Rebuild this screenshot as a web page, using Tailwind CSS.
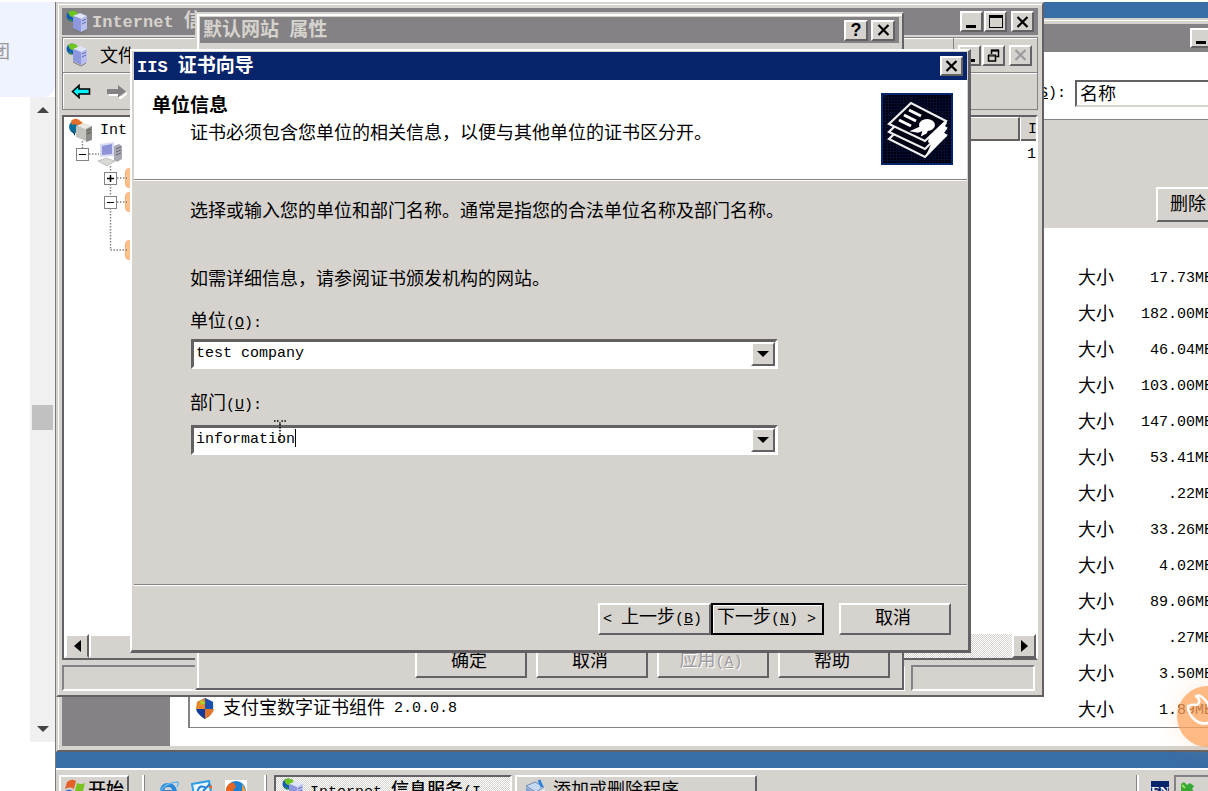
<!DOCTYPE html>
<html lang="zh-CN">
<head>
<meta charset="utf-8">
<title>IIS 证书向导</title>
<script src="https://cdn.jsdelivr.net/npm/@tailwindcss/browser@4"></script>
</head>
<body class="flex h-screen overflow-hidden bg-white pt-[2px] font-['Liberation_Mono','Noto_Sans_CJK_SC',monospace] text-lg leading-6 text-black">

<!-- Shared icons -->
<svg class="hidden" aria-hidden="true">
  <symbol id="server" viewBox="0 0 22 24">
    <circle cx="6" cy="6" r="5.500" fill="#1559b5"/>
    <path d="M2 2Q6-1 11 2L12 6 8 8 4 6z" fill="#6fc51f"/><path d="M2 8l4 2-1 2z" fill="#2a9a30"/>
    <path d="M7 6l7-3 7 3-6 3z" fill="#dfe4fb"/><path d="M7 6l8 3v13l-8-4z" fill="#8e98dc"/><path d="M15 9l6-3v13l-6 3z" fill="#b9bfee"/>
    <path d="M16 11l4-2M16 14l4-2" stroke="#5b66b0"/><path d="M7 19l8 4 5-3" fill="none" stroke="#777"/>
  </symbol>
  <symbol id="server-gray" viewBox="0 0 24 24">
    <circle cx="6" cy="9" r="6" fill="#0b6f9e"/><path d="M2 12l4 3v3z" fill="#063d63"/>
    <path d="M2 3Q6-1 10 2L14 5 9 8 6 6 3 7z" fill="#e2702a"/>
    <path d="M7 8l8-3 8 3-6 3z" fill="#e8e8e0"/><path d="M7 8l10 3v12l-10-4z" fill="#c3c3bd"/><path d="M17 11l6-3v14l-6 2z" fill="#8c8c88"/>
    <path d="M18 13l4-2M18 16l4-2" stroke="#555"/>
  </symbol>
  <symbol id="cross" viewBox="0 0 12 12"><path d="M1 1l10 10M11 1L1 11" stroke="currentColor" stroke-width="2.200"/></symbol>
</svg>

<!-- Host page edge with its scrollbar -->
<aside class="flex w-[56px] shrink-0 flex-col border-r border-[#7b797b]">
  <div class="h-[95px] overflow-hidden rounded-br-xl bg-[#eff3ff] pt-[37px]"><span class="-ml-2 block text-lg text-[#999]">团</span></div>
  <div class="ml-[30px] flex h-[645px] flex-col items-center bg-[#f0f0f0]">
    <svg class="mt-[10px] h-[6px] w-3" viewBox="0 0 12 6"><path d="M6 0l6 6H0z" fill="#444"/></svg>
    <div class="mt-[292px] h-[25px] w-[21px] bg-[#c1c1c1]"></div>
    <svg class="mt-auto mb-[10px] h-[6px] w-3" viewBox="0 0 12 6"><path d="M0 0h12L6 6z" fill="#444"/></svg>
  </div>
</aside>

<main class="flex min-w-0 flex-1 flex-col overflow-hidden">
  <div class="relative flex-1 overflow-hidden bg-[#396da5]">

    <!-- Add / remove programs -->
    <section class="absolute top-4 right-[-60px] bottom-4 left-0 flex flex-col border-2 border-t-[#d6d3ce] border-r-[#636163] border-b-[#636163] border-l-[#d6d3ce] bg-[#d6d3ce] p-1 inset-shadow-[1px_1px_0_#fff]">
      <div class="flex h-7 shrink-0 items-center justify-end bg-[#848284] px-1">
        <button aria-label="最小化" class="flex h-5 w-[22px] items-end border-2 border-t-white border-r-[#636163] border-b-[#636163] border-l-white bg-[#d6d3ce] px-1 pb-[2px]"><span class="h-[3px] w-[10px] bg-black"></span></button>
        <button aria-label="最大化" class="flex h-5 w-[22px] items-center justify-center border-2 border-t-white border-r-[#636163] border-b-[#636163] border-l-white bg-[#d6d3ce]"><span class="h-3 w-3 border border-t-2 border-black"></span></button>
        <button aria-label="关闭" class="ml-[2px] flex h-5 w-[22px] items-center justify-center border-2 border-t-white border-r-[#636163] border-b-[#636163] border-l-white bg-[#d6d3ce]"><svg class="h-3 w-[13px]"><use href="#cross"/></svg></button>
      </div>
      <div class="flex flex-1">
        <div class="w-[108px] shrink-0 bg-[#848284]"></div>
        <div class="flex flex-1 flex-col bg-white">
          <div class="flex h-[67px] items-center justify-end pt-4 pr-[27px]">
            <label for="sort" class="mr-[9px] text-[15px]">(<u>S</u>):</label>
            <select id="sort" class="h-[27px] w-[160px] appearance-none border-2 border-t-[#636163] border-r-[#d6d3ce] border-b-[#d6d3ce] border-l-[#636163] bg-white pt-[2px] pl-[3px] leading-5"><option>名称</option></select>
          </div>
          <div class="flex h-[109px] items-end justify-end border-t border-[#848284] bg-[#d6d3ce] pr-[22px] pb-[6px]">
            <button class="h-[35px] w-[84px] border-2 border-t-white border-r-[#636163] border-b-[#636163] border-l-white pr-5">删除</button>
          </div>
          <div class="mt-[31px] ml-[18px] border-b border-l-2 border-[#848284]">
            <table class="w-full">
              <tbody id="rows" class="[&_td]:h-9 [&_td]:p-0 [&_td]:pt-1"></tbody>
            </table>
          </div>
        </div>
      </div>
    </section>

    <!-- Internet information services manager -->
    <section class="absolute top-0 right-[164px] bottom-[71px] left-0 flex flex-col border-2 border-t-[#d6d3ce] border-r-[#636163] border-b-[#636163] border-l-[#d6d3ce] bg-[#d6d3ce] p-1 inset-shadow-[1px_1px_0_#fff]">
      <div class="flex h-[27px] shrink-0 items-center bg-[#848284] px-1 text-[#d6d3ce]">
        <svg class="mr-1 h-6 w-[22px]"><use href="#server"/></svg>
        <h2 class="pt-[2px] text-[19px] font-bold whitespace-nowrap"><span class="text-[17px]">Internet </span>信</h2>
        <div class="ml-auto flex text-black">
          <button aria-label="最小化" class="flex h-[21px] w-[23px] items-end border-2 border-t-white border-r-[#636163] border-b-[#636163] border-l-white bg-[#d6d3ce] px-1 pb-[2px]"><span class="h-[3px] w-[10px] bg-black"></span></button>
          <button aria-label="最大化" class="ml-px flex h-[21px] w-[23px] items-center justify-center border-2 border-t-white border-r-[#636163] border-b-[#636163] border-l-white bg-[#d6d3ce]"><span class="h-[13px] w-[14px] border border-t-3 border-black"></span></button>
          <button aria-label="关闭" class="ml-1 flex h-[21px] w-[23px] items-center justify-center border-2 border-t-white border-r-[#636163] border-b-[#636163] border-l-white bg-[#d6d3ce]"><svg class="h-3 w-[13px]"><use href="#cross"/></svg></button>
        </div>
      </div>
      <div class="mt-[2px] flex h-[73px] shrink-0 flex-col border border-[#848284] inset-shadow-[1px_1px_0_#fff]">
        <div class="flex h-[35px] items-center border-b border-[#848284] pr-[5px] pl-[3px]">
          <svg class="mr-3 h-6 w-[22px]"><use href="#server"/></svg>
          <span class="pt-[3px]">文件</span>
          <div class="ml-auto flex h-full items-center border-l border-[#848284]">
            <button aria-label="最小化子窗口" class="ml-1 flex h-[21px] w-[23px] items-end border-2 border-t-white border-r-[#636163] border-b-[#636163] border-l-white px-1 pb-[2px]"><span class="h-[3px] w-[12px] bg-black"></span></button>
            <button aria-label="还原子窗口" class="mr-1 ml-px flex h-[21px] w-[23px] items-center justify-center border-2 border-t-white border-r-[#636163] border-b-[#636163] border-l-white">
              <svg class="h-[13px] w-[13px]" viewBox="0 0 13 13" fill="none" stroke="#000"><path d="M4 1h8M4 2h8M1 6h8M1 7h8" /><path d="M4.500 5V1.500h7v6H9.500M1.500 6v6h7V6" stroke-width="1.500"/></svg></button>
            <button aria-label="关闭子窗口" disabled class="flex h-[21px] w-[23px] items-center justify-center border-2 border-t-white border-r-[#636163] border-b-[#636163] border-l-white text-[#9c9a9c]"><svg class="h-3 w-[13px]"><use href="#cross"/></svg></button>
          </div>
        </div>
        <div class="flex flex-1 items-center gap-4 border-t border-white pl-2">
          <svg class="h-[15px] w-5" viewBox="0 0 20 15"><path d="M1.500 7.500L8 1.500V5h10.500v5H8v3.500z" fill="#00f3ff" stroke="#000" stroke-width="1.600"/></svg>
          <svg class="h-[15px] w-5" viewBox="0 0 20 15"><path d="M20 9l-7 6v-4H2" fill="none" stroke="#fff" stroke-width="2"/><path d="M0 5h11V1l8 6.500-8 6V10H0z" fill="#848284"/></svg>
        </div>
      </div>
      <div class="mt-[5px] flex flex-1 flex-col border-2 border-t-[#636163] border-r-white border-b-[#636163] border-l-[#636163] bg-white pl-px">
        <div class="flex flex-1">
          <div class="relative w-[300px] pt-px">
            <svg class="absolute top-0 left-0 h-[150px] w-[66px]" fill="none" stroke="#848284" stroke-width="1.500" stroke-dasharray="1.500 1.500"><path d="M17.500 24v8M24 37h10M45.500 49v6M52 61h10M45.500 67v12M52 85h10M45.500 91v42h17"/></svg>
            <div class="flex h-6 items-center pl-1"><svg class="mr-[7px] h-6 w-6"><use href="#server-gray"/></svg><span class="pt-[2px] text-[15px]">Int</span></div>
            <div class="flex h-6 items-center gap-[9px] pl-[11px]">
              <button aria-label="折叠" class="flex h-[13px] w-[13px] items-center justify-center border border-[#848284] bg-white"><span class="h-px w-[7px] bg-black"></span></button>
              <svg class="h-6 w-6" viewBox="0 0 24 24"><path d="M16 4l5-2 3 2v13l-5 3-3-2z" fill="#a8a8b4"/><path d="M18 7l5-2M18 10l5-2M18 13l5-2" stroke="#666"/><path d="M2 2l14-2v14L2 15z" fill="#d8daf4"/><path d="M4 4l10-2v10L4 13z" fill="#8d93d6"/><path d="M0 19l8-3 9 3-8 5z" fill="#d9d9d4" stroke="#999" stroke-width=".5"/></svg>
            </div>
            <div class="flex h-6 items-center gap-2 pl-[39px]">
              <button aria-label="展开" class="flex h-[13px] w-[13px] items-center justify-center border border-[#848284] bg-white"><svg class="h-[9px] w-[9px]" viewBox="0 0 9 9"><path d="M4.500 1v7M1 4.500h7" stroke="#000" stroke-width="1.500"/></svg></button>
              <span class="h-5 w-6 rounded-l border border-[#ffb27a] bg-[#ffc08a]"></span>
            </div>
            <div class="flex h-6 items-center gap-2 pl-[39px]">
              <button aria-label="折叠" class="flex h-[13px] w-[13px] items-center justify-center border border-[#848284] bg-white"><span class="h-px w-[7px] bg-black"></span></button>
              <span class="h-5 w-6 rounded-l border border-[#ffb27a] bg-[#ffc08a]"></span>
            </div>
            <div class="mt-6 flex h-6 items-center pl-[60px]"><span class="h-5 w-6 rounded-l border border-[#ffb27a] bg-[#ffc08a]"></span></div>
          </div>
          <div class="flex-1 overflow-hidden">
            <div class="flex h-6 items-center justify-end border-b-2 border-[#636163] bg-[#d6d3ce]">
              <div class="h-full flex-1 border-t border-r-2 border-t-white border-r-[#636163]"></div>
              <div class="w-4 overflow-hidden border-l border-white pt-1 pl-[7px] text-[15px]">I</div>
            </div>
            <div class="pt-[2px] text-right text-[15px]">1</div>
          </div>
        </div>
        <div class="flex h-6 bg-[repeating-conic-gradient(#fff_0_25%,#d6d3ce_0_50%)] bg-[length:2px_2px]">
          <button aria-label="向左滚动" class="flex w-6 items-center justify-center border-2 border-t-white border-r-[#636163] border-b-[#d6d3ce] border-l-white bg-[#d6d3ce]"><svg class="h-3 w-[7px]" viewBox="0 0 7 12"><path d="M7 0v12L0 6z"/></svg></button>
          <div class="w-3/5 border-2 border-t-white border-r-[#636163] border-b-[#d6d3ce] border-l-white bg-[#d6d3ce]"></div>
          <button aria-label="向右滚动" class="ml-auto flex w-6 items-center justify-center border-2 border-t-white border-r-[#636163] border-b-[#636163] border-l-white bg-[#d6d3ce]"><svg class="h-3 w-[7px]" viewBox="0 0 7 12"><path d="M0 0v12l7-6z"/></svg></button>
        </div>
      </div>
      <div class="mt-[5px] flex h-[26px] shrink-0 gap-[6px] pr-[3px]">
        <div class="flex-1 border-2 border-t-[#848284] border-r-white border-b-white border-l-[#848284]"></div>
        <div class="w-[124px] border-2 border-t-[#848284] border-r-white border-b-white border-l-[#848284]"></div>
      </div>
    </section>

    <!-- Default web site properties -->
    <section class="absolute top-[10px] right-[304px] bottom-[78px] left-[139px] flex flex-col border-2 border-t-[#d6d3ce] border-r-[#636163] border-b-[#636163] border-l-[#d6d3ce] bg-[#d6d3ce] p-[3px] pb-[10px] inset-shadow-[2px_2px_0_#fff]">
      <div class="flex h-[26px] shrink-0 items-center bg-[#848284] pr-1 pl-[3px]">
        <h2 class="pt-[2px] text-[19px] font-bold text-[#d6d3ce]">默认网站<span class="text-[17px]">&nbsp;</span>属性</h2>
        <button aria-label="帮助" class="ml-auto flex h-[21px] w-6 items-center justify-center border-2 border-t-white border-r-[#636163] border-b-[#636163] border-l-white bg-[#d6d3ce] font-['Liberation_Sans'] text-lg leading-4 font-bold">?</button>
        <button aria-label="关闭" class="ml-[3px] flex h-[21px] w-6 items-center justify-center border-2 border-t-white border-r-[#636163] border-b-[#636163] border-l-white bg-[#d6d3ce]"><svg class="h-3 w-[13px]"><use href="#cross"/></svg></button>
      </div>
      <div class="mt-auto flex justify-end gap-[9px] pr-[9px]">
        <button class="h-8 w-[112px] border-2 border-t-white border-r-[#636163] border-b-[#636163] border-l-white pr-1">确定</button>
        <button class="h-8 w-[112px] border-2 border-t-white border-r-[#636163] border-b-[#636163] border-l-white pr-1">取消</button>
        <button disabled class="h-8 w-[112px] border-2 border-t-white border-r-[#636163] border-b-[#636163] border-l-white pr-1 text-[#9c9a9c] text-shadow-[1px_1px_0_#fff]">应用<span class="text-[15px]">(<u>A</u>)</span></button>
        <button class="h-8 w-[112px] border-2 border-t-white border-r-[#636163] border-b-[#636163] border-l-white pr-1">帮助</button>
      </div>
    </section>

    <!-- Certificate wizard -->
    <form class="absolute top-[47px] right-[237px] bottom-[115px] left-[74px] flex flex-col border-t-2 border-r-3 border-b-3 border-l-2 border-t-white border-r-[#636163] border-b-[#636163] border-l-white bg-[#d6d3ce] pt-px pr-px pl-[2px]">
      <div class="flex h-7 shrink-0 items-center justify-between bg-[#08246b] pr-1 pl-[3px] text-white">
        <h1 class="pt-[2px] text-[19px] font-bold"><span class="text-[17px]">IIS </span>证书向导</h1>
        <button type="button" aria-label="关闭" class="flex h-5 w-[23px] items-center justify-center border-2 border-t-white border-r-[#636163] border-b-[#636163] border-l-white bg-[#d6d3ce] text-black"><svg class="h-3 w-[13px]"><use href="#cross"/></svg></button>
      </div>
      <div class="flex h-[99px] shrink-0 justify-between bg-white pt-[13px] pr-[14px] pl-[18px]">
        <div class="pt-[2px]">
          <h2 class="text-[19px] font-bold">单位信息</h2>
          <p class="pl-[38px] leading-[30px]">证书必须包含您单位的相关信息，以便与其他单位的证书区分开。</p>
        </div>
        <svg class="h-[72px] w-[72px] shrink-0" viewBox="0 0 72 72">
          <rect width="72" height="72" fill="#000010"/>
          <path d="M0 1h72M0 71h72M1 0v72M71 0v72" stroke="#08246b" stroke-width="2"/>
          <path d="M4 4h64v64H4z" fill="none" stroke="#08246b" stroke-width="64" stroke-dasharray="1 2" opacity=".35"/>
          <g fill="#000010" stroke="#efefef" stroke-width="2.200" stroke-linejoin="miter">
            <path d="M29 26L8 46l36 18 21-22z"/><path d="M29 18L8 39l36 17 21-21z"/><path d="M30 10L8 31l36 17 21-20z"/>
          </g>
          <path d="M65 28L48 44l-1 5 3 2-2 5-4 8 22-21-3-3 3-4-2-3 2-3z" fill="#fff"/>
          <path d="M28 17l12 6M23 22l12 6M18 27l12 6" stroke="#fff" stroke-width="3"/>
          <ellipse cx="46" cy="32" rx="8" ry="6" fill="#fff"/><path d="M40 34l-9 4 6 1 5-2M43 35l-2 7 4-2 2-4" fill="#fff" stroke="#fff" stroke-width="1.500"/>
        </svg>
      </div>
      <div class="h-[2px] shrink-0 border-t border-b border-t-[#848284] border-b-white"></div>
      <div class="flex-1 pt-[19px] pl-[56px]">
        <p>选择或输入您的单位和部门名称。通常是指您的合法单位名称及部门名称。</p>
        <p class="mt-11">如需详细信息，请参阅证书颁发机构的网站。</p>
        <label for="org" class="mt-[18px] block h-6">单位<span class="text-[15px]">(<u>O</u>):</span></label>
        <div class="mt-[5px] mr-[189px] ml-px flex h-[30px] border-3 border-t-[#636163] border-r-white border-b-white border-l-[#636163] bg-white">
          <input id="org" value="test company" class="min-w-0 flex-1 pl-[2px] text-[15px] outline-none">
          <button type="button" aria-label="单位列表" class="flex w-6 items-center justify-center border-2 border-t-white border-r-[#636163] border-b-[#636163] border-l-white bg-[#d6d3ce]"><svg class="h-[6px] w-3" viewBox="0 0 12 6"><path d="M0 0h12L6 6z"/></svg></button>
        </div>
        <label for="unit" class="mt-[23px] block h-6">部门<span class="text-[15px]">(<u>U</u>):</span></label>
        <div class="relative mt-[9px] mr-[189px] ml-px flex h-[30px] border-3 border-t-[#636163] border-r-white border-b-white border-l-[#636163] bg-white">
          <input id="unit" value="information" class="min-w-0 flex-1 pl-[2px] text-[15px] outline-none">
          <button type="button" aria-label="部门列表" class="flex w-6 items-center justify-center border-2 border-t-white border-r-[#636163] border-b-[#636163] border-l-white bg-[#d6d3ce]"><svg class="h-[6px] w-3" viewBox="0 0 12 6"><path d="M0 0h12L6 6z"/></svg></button>
          <span class="absolute top-px left-[101px] h-[18px] w-px bg-black"></span>
          <!-- I-beam pointer -->
          <svg class="absolute -top-2 left-[80px] h-7 w-3" viewBox="0 0 12 28" fill="none" stroke="#000" stroke-width="1.500" stroke-dasharray="1.500 1.500"><path d="M0 1h4l2 2 2-2h4M6 4v18"/></svg>
        </div>
      </div>
      <div class="flex shrink-0 justify-end border-t border-[#848284] pt-[18px] pr-[16px] pb-[15px] inset-shadow-[0_1px_0_#fff]">
        <button type="button" class="h-8 w-[113px] border-2 border-t-white border-r-[#636163] border-b-[#636163] border-l-white pr-1 whitespace-nowrap"><span class="text-[15px]">&lt; </span>上一步<span class="text-[15px]">(<u>B</u>)</span></button>
        <button type="submit" class="h-8 w-[113px] border-2 border-black pr-[2px] whitespace-nowrap inset-shadow-[1px_1px_0_#fff]"><span>下一步</span><span class="text-[15px]">(<u>N</u>) &gt;</span></button>
        <button type="button" class="ml-[15px] h-8 w-[112px] border-2 border-t-white border-r-[#636163] border-b-[#636163] border-l-white pr-1">取消</button>
      </div>
    </form>

    <!-- Floating support bubble -->
    <a href="#" aria-label="客服" class="absolute right-[-30px] bottom-[21px] flex h-[61px] w-[61px] items-start rounded-full bg-[#ffa15a]/75 pt-[8px] pl-2 shadow-[0_0_24px_#ffa15a33]">
      <svg class="h-10 w-10" viewBox="0 0 40 40" fill="none" stroke="#fff" stroke-width="2.500" stroke-linecap="round"><path d="M11 2q4-2 8 3 4 3 6 11M11 2q6 5 1 9-4-1-9 1 0 8 7 14 8 6 15 2l5 1"/></svg>
    </a>
  </div>

  <!-- Taskbar -->
  <footer class="flex h-[23px] shrink-0 overflow-hidden border-t-2 border-white bg-[#d6d3ce] pt-[5px]">
    <button class="ml-[3px] flex h-[30px] w-[70px] shrink-0 items-center border-2 border-t-white border-r-[#636163] border-b-[#636163] border-l-white pl-[3px] text-lg font-medium whitespace-nowrap">
      <svg class="mr-[2px] h-[22px] w-[22px] shrink-0" viewBox="0 0 22 22"><path d="M3 3q5-4 9-1L10 10q-4-3-9 0z" fill="#e2622a"/><path d="M13 4q4 2 8 0l-2 8q-4 2-8 0z" fill="#7cc21e"/><path d="M1 12q4-3 8 0l-2 7q-4-2-7 0z" fill="#3a74d8"/><path d="M10 13q4 2 8 0l-2 7q-4 2-8 0z" fill="#f2c322"/></svg><span class="pt-[2px]">开始</span></button>
    <span class="ml-[13px] h-8 w-[3px] shrink-0 border-l-2 border-r border-l-white border-r-[#848284]"></span>
    <nav class="ml-[12px] flex h-8 shrink-0 items-center gap-3">
      <a href="#" aria-label="Internet Explorer"><svg class="h-[22px] w-[22px]" viewBox="0 0 22 22" fill="none"><path d="M18 12H5q0-7 6-7t7 7M5 12q1 7 12 4" stroke="#2a86d8" stroke-width="4"/><path d="M1 18Q4 3 20 2q3 0 0 5" stroke="#6bb8ee" stroke-width="1.500"/></svg></a>
      <a href="#" aria-label="显示桌面"><svg class="h-[22px] w-[22px]" viewBox="0 0 22 22"><path d="M1 4l17-3 3 17-17 3z" fill="#e9f5ff" stroke="#2a9ce8" stroke-width="2"/><path d="M15 8q-6-4-8 2t7 5M12 11l7-7" fill="none" stroke="#1c82d8" stroke-width="2"/><path d="M17 7l4-2v4z" fill="#e26b2a"/></svg></a>
      <a href="#" aria-label="浏览器"><svg class="h-[22px] w-[22px] bg-white" viewBox="0 0 22 22"><circle cx="11" cy="11" r="10" fill="#1f7fd0"/><path d="M1 8Q4 2 9 3l2 4-3 3 4 8Q1 20 1 8z" fill="#e8651f"/><path d="M17 4q5 5 3 11l-5 1q3-5 2-12z" fill="#f6a43a"/></svg></a>
    </nav>
    <span class="ml-[17px] h-8 w-[3px] shrink-0 border-l-2 border-r border-l-white border-r-[#848284]"></span>
    <button class="ml-[7px] flex h-[30px] w-[238px] shrink-0 items-center overflow-hidden border-2 border-t-[#636163] border-r-white border-b-white border-l-[#636163] bg-[repeating-conic-gradient(#fff_0_25%,#d6d3ce_0_50%)] bg-[length:2px_2px] pl-[6px] font-medium whitespace-nowrap">
      <svg class="mr-[6px] h-6 w-[22px] shrink-0"><use href="#server"/></svg><span class="pt-1"><span class="text-[15px]">Internet </span>信息服务<span class="text-[15px]">(I</span></span></button>
    <button class="ml-[3px] flex h-[30px] w-[242px] shrink-0 items-center overflow-hidden border-2 border-t-white border-r-[#636163] border-b-[#636163] border-l-white pl-2 whitespace-nowrap">
      <svg class="mr-[6px] h-[22px] w-[22px] shrink-0" viewBox="0 0 22 22"><path d="M1 7l9-4 9 5-8 5z" fill="#c5d9f2" stroke="#6d8cb8"/><path d="M1 8l10 6v7L1 15z" fill="#7fa6da"/><path d="M11 14l9-5v7l-9 5z" fill="#dfe9f7"/><path d="M14 1l3 7" stroke="#2a86d8" stroke-width="3"/></svg><span class="pt-[2px]">添加或删除程序</span></button>
    <div class="ml-auto flex shrink-0">
      <span class="h-8 w-[3px] border-l border-r-2 border-l-[#848284] border-r-white"></span>
      <span class="mt-[6px] ml-3 h-[18px] w-[18px] overflow-hidden bg-[#08246b] text-center font-['Liberation_Serif'] text-[13px] leading-5 font-bold text-white">EN</span>
      <span class="ml-[5px] h-[30px] w-[34px] border-t-2 border-l-2 border-[#848284] pl-1">
        <svg class="mt-1 h-4 w-4" viewBox="0 0 16 16"><path d="M1 3l3-2 3 3 3-2 4 3-2 3 4 5-5 2-5-3-5 3z" fill="#35a835"/><path d="M2 4l3 3" stroke="#9be05a" stroke-width="2"/></svg></span>
    </div>
  </footer>
</main>

<script>
  const sizes = ['17.73MB', '182.00MB', '46.04MB', '103.00MB', '147.00MB', '53.41MB', '.22MB', '33.26MB', '4.02MB', '89.06MB', '.27MB', '3.50MB', '1.89MB'];
  const shield = `<svg class="mr-2 h-[22px] w-5" viewBox="0 0 20 22"><path d="M10 0l8 4q2 11-8 17Q0 15 2 4z" fill="#2a6fd0"/><path d="M10 0l8 4v7h-8z" fill="#1d4fae"/><path d="M2 4l8-4v11H1z" fill="#e98a2a"/><path d="M5 2l6 3-5 2z" fill="#a8d82a"/><path d="M1 11h9v10Q2 16 1 11z" fill="#143a9c"/><path d="M10 11h9q-2 7-9 10z" fill="#e0752a"/></svg>`;
  document.getElementById('rows').innerHTML = sizes.map((size, i) => `<tr>
    <td><div class="flex items-center pb-1 pl-[5px]">${i === sizes.length - 1 ? shield + '支付宝数字证书组件<span class="text-[15px]">&nbsp;2.0.0.8</span>' : ''}</div></td>
    <td class="w-9 whitespace-nowrap">大小</td>
    <td class="w-[148px]"><div class="pr-[49px] text-right text-[15px]">${size}</div></td></tr>`).join('');
</script>
</body>
</html>
